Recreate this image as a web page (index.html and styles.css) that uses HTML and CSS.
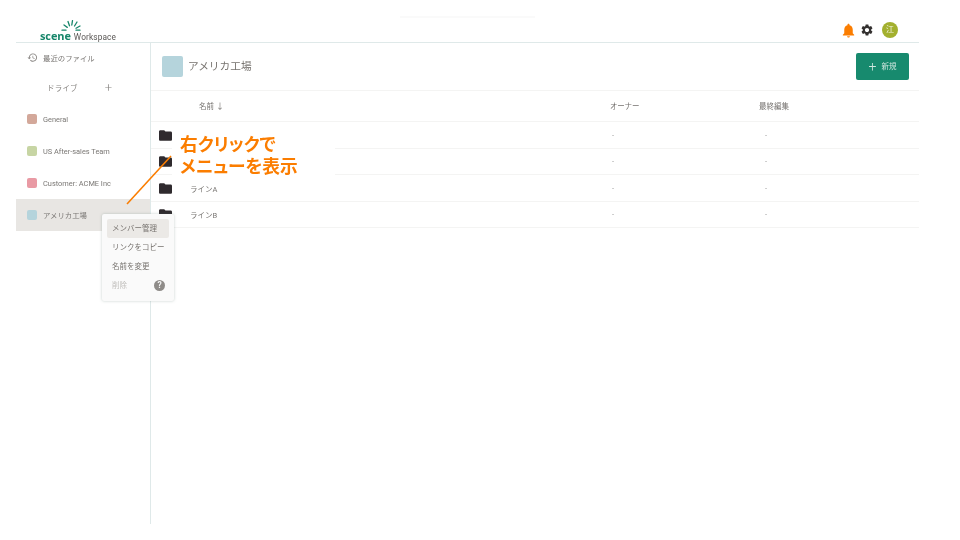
FILE: index.html
```html
<!DOCTYPE html>
<html lang="ja">
<head>
<meta charset="utf-8">
<title>scene Workspace</title>
<link rel="stylesheet" href="styles.css">
</head>
<body>
<div class="page">
<div class="app">
  <header class="topbar">
    <div class="logo">
      <svg class="rays" viewBox="0 0 20 11" width="20" height="11">
        <g stroke="#17866a" stroke-width="1.3" stroke-linecap="round" fill="none">
          <line x1="1" y1="10.2" x2="5" y2="10.2"/>
          <line x1="3" y1="5" x2="6.3" y2="7.4"/>
          <line x1="7" y1="1.5" x2="8.5" y2="5.8"/>
          <line x1="11.5" y1="0.6" x2="10.8" y2="5"/>
          <line x1="16" y1="2" x2="13.5" y2="6"/>
          <line x1="19" y1="6" x2="15" y2="8.2"/>
          <line x1="19" y1="10.2" x2="15" y2="10.2"/>
        </g>
      </svg>
      <div class="wordmark"><span class="scene">scene</span><span class="workspace">Workspace</span></div>
    </div>
    <div class="top-actions">
      <svg class="bell" viewBox="0 0 24 24" width="17" height="17"><path fill="#fb7d00" d="M12 22c1.1 0 2-.9 2-2h-4c0 1.1.9 2 2 2zm6-6v-5c0-3.07-1.64-5.64-4.5-6.32V4c0-.83-.67-1.5-1.5-1.5s-1.5.67-1.5 1.5v.68C7.63 5.36 6 7.92 6 11v5l-2 2v1h16v-1l-2-2z"/></svg>
      <svg class="gear" viewBox="0 0 24 24" width="14" height="14"><path fill="#33302f" d="M19.14 12.94c.04-.3.06-.61.06-.94 0-.32-.02-.64-.07-.94l2.03-1.58c.18-.14.23-.41.12-.61l-1.92-3.32c-.12-.22-.37-.29-.59-.22l-2.39.96c-.5-.38-1.03-.7-1.62-.94l-.36-2.54c-.04-.24-.24-.41-.48-.41h-3.84c-.24 0-.43.17-.47.41l-.36 2.54c-.59.24-1.13.57-1.62.94l-2.39-.96c-.22-.08-.47 0-.59.22L2.74 8.87c-.12.21-.08.47.12.61l2.03 1.58c-.05.3-.09.63-.09.94s.02.64.07.94l-2.03 1.58c-.18.14-.23.41-.12.61l1.92 3.32c.12.22.37.29.59.22l2.39-.96c.5.38 1.03.7 1.62.94l.36 2.54c.05.24.24.41.48.41h3.84c.24 0 .44-.17.47-.41l.36-2.54c.59-.24 1.13-.56 1.62-.94l2.39.96c.22.08.47 0 .59-.22l1.92-3.32c.12-.22.07-.47-.12-.61l-2.01-1.58zM12 15.6c-1.98 0-3.6-1.62-3.6-3.6s1.62-3.6 3.6-3.6 3.6 1.62 3.6 3.6-1.62 3.6-3.6 3.6z"/></svg>
      <div class="avatar">江</div>
    </div>
  </header>
  <div class="body">
    <aside class="sidebar">
      <div class="recent">
        <svg viewBox="0 0 24 24" width="11" height="11"><path fill="#8a8784" d="M13 3c-4.97 0-9 4.03-9 9H1l3.89 3.89.07.14L9 12H6c0-3.87 3.13-7 7-7s7 3.13 7 7-3.13 7-7 7c-1.93 0-3.68-.79-4.94-2.06l-1.42 1.42C8.27 19.99 10.51 21 13 21c4.97 0 9-4.03 9-9s-4.03-9-9-9zm-1 5v5l4.28 2.54.72-1.21-3.5-2.08V8H12z"/></svg>
        <span>最近のファイル</span>
      </div>
      <div class="drive-head"><span>ドライブ</span><span class="plus">+</span></div>
      <div class="drive"><i class="swatch s-general"></i><span>General</span></div>
      <div class="drive"><i class="swatch s-us"></i><span>US After-sales Team</span></div>
      <div class="drive"><i class="swatch s-acme"></i><span>Customer: ACME Inc</span></div>
      <div class="drive active"><i class="swatch s-america"></i><span>アメリカ工場</span></div>
    </aside>
    <main class="main">
      <div class="title-row">
        <i class="title-swatch"></i>
        <h1>アメリカ工場</h1>
        <button class="new-btn"><span class="new-plus">+</span><span>新規</span></button>
      </div>
      <div class="row head">
        <span></span><span class="name-head">名前 <span class="arrow">↓</span></span><span class="owner-head">オーナー</span><span>最終編集</span>
      </div>
      <div class="row">
        <svg viewBox="2 4 20 16" width="13" height="11"><path fill="#2f2a2e" d="M10 4H4c-1.1 0-2 .9-2 2v12c0 1.1.9 2 2 2h16c1.1 0 2-.9 2-2V8c0-1.1-.9-2-2-2h-8l-2-2z"/></svg>
        <span></span><span class="dash">-</span><span class="dash last">-</span>
      </div>
      <div class="row">
        <svg viewBox="2 4 20 16" width="13" height="11"><path fill="#2f2a2e" d="M10 4H4c-1.1 0-2 .9-2 2v12c0 1.1.9 2 2 2h16c1.1 0 2-.9 2-2V8c0-1.1-.9-2-2-2h-8l-2-2z"/></svg>
        <span></span><span class="dash">-</span><span class="dash last">-</span>
      </div>
      <div class="row">
        <svg viewBox="2 4 20 16" width="13" height="11"><path fill="#2f2a2e" d="M10 4H4c-1.1 0-2 .9-2 2v12c0 1.1.9 2 2 2h16c1.1 0 2-.9 2-2V8c0-1.1-.9-2-2-2h-8l-2-2z"/></svg>
        <span>ラインA</span><span class="dash">-</span><span class="dash last">-</span>
      </div>
      <div class="row">
        <svg viewBox="2 4 20 16" width="13" height="11"><path fill="#2f2a2e" d="M10 4H4c-1.1 0-2 .9-2 2v12c0 1.1.9 2 2 2h16c1.1 0 2-.9 2-2V8c0-1.1-.9-2-2-2h-8l-2-2z"/></svg>
        <span>ラインB</span><span class="dash">-</span><span class="dash last">-</span>
      </div>
    </main>
  </div>
</div>
<div class="top-ghost"></div>
<div class="context-menu">
  <div class="menu-item hover">メンバー管理</div>
  <div class="menu-item">リンクをコピー</div>
  <div class="menu-item">名前を変更</div>
  <div class="menu-item disabled"><span>削除</span><span class="help">?</span></div>
</div>
<div class="callout">右クリックで<br>メニューを表示</div>
<svg class="pointer" viewBox="0 0 50 52" width="50" height="52"><line x1="2" y1="50" x2="46" y2="2" stroke="#fb7d00" stroke-width="1.6"/></svg>
</div>
</body>
</html>
```
FILE: styles.css
```css
* { box-sizing: border-box; }
html, body { margin: 0; height: 100%; }
body {
  background: #fff;
  font-family: Roboto, "Noto Sans CJK JP", sans-serif;
  color: #6b6865;
  overflow: hidden;
}
.page {
  position: relative;
  width: 960px;
  height: 540px;
  background: #fff;
  filter: blur(0.5px);
}
.app { width: 903px; height: 524px; margin-left: 16px; display: flex; flex-direction: column; }
.topbar {
  height: 43px;
  flex: none;
  border-bottom: 1px solid #dfe9e9;
  display: flex;
  justify-content: space-between;
  padding: 0 21px 0 24px;
}
.logo { display: flex; flex-direction: column; align-items: flex-start; padding-top: 20px; width: 80px; }
.rays { display: block; margin-left: 21px; }
.wordmark { display: flex; align-items: baseline; height: 10px; line-height: 10px; white-space: nowrap; }
.scene { font: 700 11px/10px "Open Sans", sans-serif; color: #17866a; letter-spacing: -0.1px; }
.workspace { font: 8.3px/10px Roboto, sans-serif; color: #5a5755; margin-left: 3px; letter-spacing: .1px; }
.top-actions { display: flex; align-items: center; padding-top: 18px; }
.bell { margin-right: 3px; }
.gear { margin-right: 8px; }
.avatar {
  width: 16px; height: 16px; border-radius: 50%;
  background: #a3b02f; color: #f3f3df;
  font-size: 8px; line-height: 16px; text-align: center;
}
.body { flex: 1; display: flex; min-height: 0; }
.sidebar { width: 135px; flex: none; border-right: 1px solid #dfe9e9; font-size: 7.4px; color: #7a7774; }
.recent { height: 30px; display: flex; align-items: center; padding: 0 0 1px 11px; gap: 5px; }
.drive-head { height: 30px; display: flex; align-items: center; padding: 0 0 1px 31px; font-size: 7.5px; color: #8a8784; letter-spacing: .2px; }
.plus { margin-left: 27px; font-size: 13px; line-height: 12px; color: #8a8784; font-weight: 300; }
.drive { height: 32px; display: flex; align-items: center; padding-left: 11px; gap: 6px; white-space: nowrap; }
.drive.active { background: #e8e6e3; }
.drive.active span { margin-top: -1px; }
.swatch { width: 10px; height: 10px; border-radius: 2px; flex: none; }
.s-general { background: #d3a89a; }
.s-us { background: #c7d5a4; }
.s-acme { background: #e99aa4; }
.s-america, .title-swatch { background: #b5d4dc; }
.main { flex: 1; min-width: 0; }
.title-row { height: 48px; display: flex; align-items: center; padding: 0 10px 0 11px; border-bottom: 1px solid #f4f4f3; }
.title-swatch { width: 21px; height: 21px; border-radius: 2px; flex: none; }
h1 { flex: 1; margin: 0 0 3px 5px; font-size: 10.7px; font-weight: 400; color: #77736f; }
.new-btn {
  width: 53px; height: 27px; border: 0; border-radius: 2px;
  background: #178a6e; color: #cfe7df;
  display: flex; align-items: center; justify-content: center; gap: 5px;
  font: 7.5px Roboto, "Noto Sans CJK JP", sans-serif;
  padding: 0 0 2px;
}
.new-plus { font-size: 14px; font-weight: 300; line-height: 12px; }
.row {
  height: 26.5px;
  display: grid;
  grid-template-columns: 31px 420px 149px 1fr;
  align-items: center;
  padding: 1px 0 0 8px;
  border-bottom: 1px solid #f4f4f3;
  font-size: 7.5px;
  color: #7a7774;
}
.row.head { height: 31px; padding: 0 0 2px 8px; color: #75726f; }
.owner-head { letter-spacing: -.2px; }
.name-head { padding-left: 9px; }
.arrow { font-size: 8px; }
.dash { padding-left: 2px; color: #999; }
.dash.last { padding-left: 6px; }
.top-ghost { position: absolute; left: 400px; top: 16px; width: 135px; height: 2px; background: #fafafa; }
.context-menu {
  position: absolute; left: 102px; top: 214px; width: 72px; height: 87px;
  background: #fafafa; border-radius: 2px;
  box-shadow: 0 0 3px rgba(90, 120, 110, .35);
  padding: 5px;
  font-size: 7.5px; color: #77736f;
}
.menu-item { height: 19px; line-height: 19px; padding: 0 5px; white-space: nowrap; border-radius: 2px; }
.menu-item.hover { background: #ebe9e6; }
.menu-item.disabled { display: flex; justify-content: space-between; align-items: center; color: #c0bebb; padding-right: 4px; }
.help {
  width: 11px; height: 11px; border-radius: 50%;
  background: #8f8c89; color: #f4f4f4;
  font-size: 8.5px; font-weight: 700; line-height: 11px; text-align: center;
}
.callout {
  position: absolute; left: 172px; top: 132px; width: 163px; height: 44px;
  padding: 0 0 0 8px;
  background: #fff;
  font: 700 17.7px/22px "Noto Sans CJK JP", sans-serif;
  font-feature-settings: "palt";
  color: #fb7d00;
  white-space: nowrap;
}
.pointer { position: absolute; left: 125px; top: 154px; }
```
